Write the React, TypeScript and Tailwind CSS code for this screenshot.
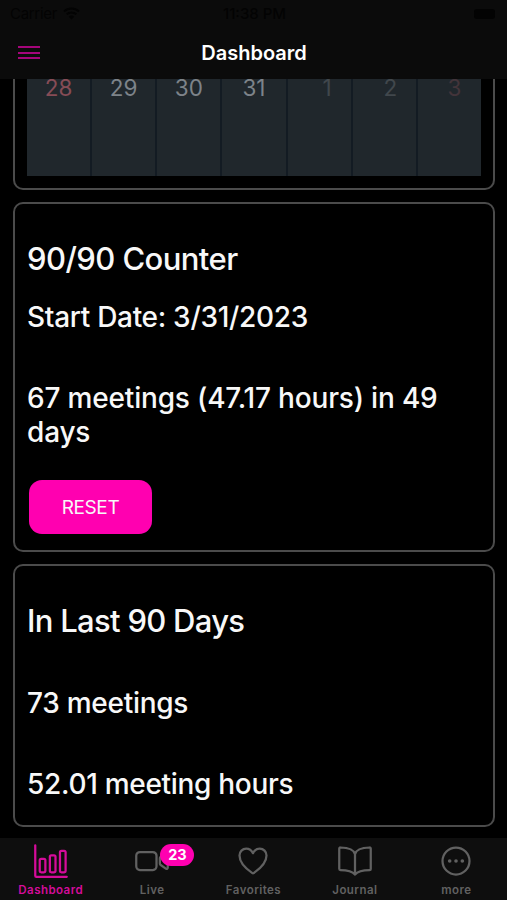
import {
  IoBarChartOutline,
  IoBookOutline,
  IoEllipsisHorizontalCircle,
  IoHeartOutline,
  IoVideocamOutline,
} from "react-icons/io5";
import type { IconType } from "react-icons";

// one day cell in the last row of the calendar
interface Day {
  label: string;
  color: string;
}

interface Tab {
  name: string;
  icon: IconType;
  badge?: number;
}

const days: Day[] = [
  { label: "28", color: "text-[#864c56]" },
  { label: "29", color: "text-[#7d8389]" },
  { label: "30", color: "text-[#7d8389]" },
  { label: "31", color: "text-[#7d8389]" },
  { label: "1", color: "pl-4 text-[#41474c]" },
  { label: "2", color: "pl-3 text-[#41474c]" },
  { label: "3", color: "pl-2.5 text-[#43343a]" },
];

const tabs: Tab[] = [
  { name: "Dashboard", icon: IoBarChartOutline },
  { name: "Live", icon: IoVideocamOutline, badge: 23 },
  { name: "Favorites", icon: IoHeartOutline },
  { name: "Journal", icon: IoBookOutline },
  { name: "more", icon: IoEllipsisHorizontalCircle },
];

const StatusBar = () => (
  <div className="grid h-[27px] grid-cols-3 items-center px-[10px] text-[15px] leading-[27px] text-[#030303]">
    <div className="flex items-center gap-1.5">
      <span className="tracking-[-0.3px]">Carrier</span>
      <svg width="17" height="13" viewBox="0 0 17 13" fill="none" stroke="currentColor" strokeWidth="2">
        <path d="M1 4.5a11 11 0 0 1 15 0M3.7 7.3a7 7 0 0 1 9.6 0" />
        <path d="M8.500 12.500 5.800 9.700a4 4 0 0 1 5.400 0Z" fill="currentColor" stroke="none" />
      </svg>
    </div>
    <span className="pl-0.5 text-center font-medium whitespace-nowrap">11:38 PM</span>
    <div className="flex justify-end pr-[2px]">
      <div className="h-[10px] w-[21px] rounded-[3px] bg-[#030303]" />
    </div>
  </div>
);

const Header = () => (
  <header className="h-[79px] shrink-0 bg-[#0b0b0b]">
    <StatusBar />
    <div className="grid h-[51px] grid-cols-[1fr_auto_1fr] items-center px-[18px]">
      <button className="flex w-[22px] flex-col gap-[3.500px]" aria-label="Menu">
        <span className="h-[2px] bg-[#a5057b]" />
        <span className="h-[2px] bg-[#a5057b]" />
        <span className="h-[2px] bg-[#a5057b]" />
      </button>
      <h1 className="pl-px text-[20px] font-semibold text-white">Dashboard</h1>
    </div>
  </header>
);

const CalendarCard = () => (
  <section className="h-[111px] shrink-0 rounded-b-[10px] border-2 border-t-0 border-[#4b4b4b] px-[12px]">
    <div className="grid h-[97px] grid-cols-7 gap-[2px] bg-[#131b23]">
      {days.map((day) => (
        <div key={day.label} className={`bg-[#20272c] text-center text-[22.500px] leading-[17px] ${day.color}`}>
          {day.label}
        </div>
      ))}
    </div>
  </section>
);

const CounterCard = () => (
  <section className="mt-3 h-[350px] shrink-0 rounded-[10px] border-2 border-[#4b4b4b] px-[12px] pt-[36px]">
    <h2 className="text-[31px] leading-[38px] font-[450] tracking-[-0.57px]">90/90 Counter</h2>
    <p className="mt-[22px] text-[28px] leading-[34px] font-[450] tracking-[-0.3px]">Start Date: 3/31/2023</p>
    <p className="mt-[47px] text-[28px] leading-[34px] font-[450] tracking-[-0.18px]">
      67 meetings (47.17 hours) in 49 days
    </p>
    <button className="mt-[31px] ml-[2px] h-[54px] w-[123px] rounded-[13px] bg-[#ff00b0] pt-[3px] text-[19px] tracking-[-0.4px]">
      RESET
    </button>
  </section>
);

const LastDaysCard = () => (
  <section className="mt-3 h-[263px] shrink-0 rounded-[10px] border-2 border-[#4b4b4b] px-[12px] pt-[36px]">
    <h2 className="text-[31px] leading-[38px] font-[450] tracking-[-0.7px]">In Last 90 Days</h2>
    <p className="mt-[46px] text-[28px] leading-[34px] font-[450] tracking-[-0.28px]">73 meetings</p>
    <p className="mt-[47px] text-[28px] leading-[34px] font-[450] tracking-[-0.3px]">52.01 meeting hours</p>
  </section>
);

const TabBar = () => (
  <nav className="grid h-[62px] shrink-0 grid-cols-5 bg-[#0e0e0e]">
    {tabs.map(({ name, icon: Icon, badge }) => (
      <div
        key={name}
        className={`relative flex flex-col items-center pt-[5px] ${name === "Dashboard" ? "text-[#d50c9a]" : "text-[#616161]"}`}
      >
        <Icon size={36} />
        <span className="mt-[4px] text-[11.500px] leading-[14px] font-semibold tracking-[0.45px]">{name}</span>
        {badge && (
          <span className="absolute top-[6px] left-[59px] flex h-[22px] w-[34px] items-center justify-center rounded-full bg-[#ff00b0] text-[14.500px] font-bold text-white">
            {badge}
          </span>
        )}
      </div>
    ))}
  </nav>
);

export default function App() {
  return (
    <div className="flex h-[900px] w-[507px] flex-col overflow-hidden bg-black font-['Inter',sans-serif] text-[#f8f8f8]">
      <Header />
      <main className="flex min-h-0 flex-1 flex-col pr-[12px] pl-[13px]">
        <CalendarCard />
        <CounterCard />
        <LastDaysCard />
      </main>
      <TabBar />
    </div>
  );
}
